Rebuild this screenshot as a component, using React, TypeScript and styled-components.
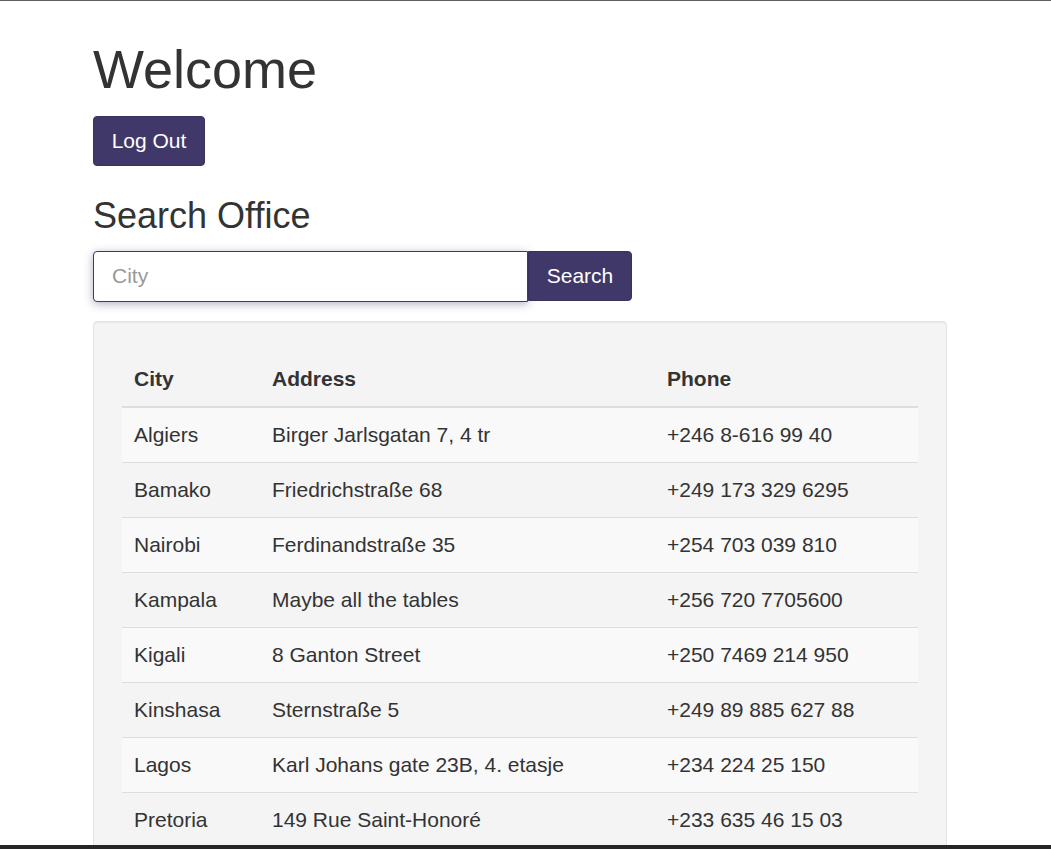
import React from "react"
import styled, { createGlobalStyle } from "styled-components"

interface Office {
    city: string
    address: string
    phone: string
}

const offices: Office[] = [
    { city: "Algiers", address: "Birger Jarlsgatan 7, 4 tr", phone: "+246 8-616 99 40" },
    { city: "Bamako", address: "Friedrichstraße 68", phone: "+249 173 329 6295" },
    { city: "Nairobi", address: "Ferdinandstraße 35", phone: "+254 703 039 810" },
    { city: "Kampala", address: "Maybe all the tables", phone: "+256 720 7705600" },
    { city: "Kigali", address: "8 Ganton Street", phone: "+250 7469 214 950" },
    { city: "Kinshasa", address: "Sternstraße 5", phone: "+249 89 885 627 88" },
    { city: "Lagos", address: "Karl Johans gate 23B, 4. etasje", phone: "+234 224 25 150" },
    { city: "Pretoria", address: "149 Rue Saint-Honoré", phone: "+233 635 46 15 03" },
]

const GlobalStyle = createGlobalStyle`
    html{
        scrollbar-width: none;
    }
    html::-webkit-scrollbar{
        display: none;
    }
    body{
        margin: 0;
        border-top: 1px solid #5f5f5f;
        background: #ffffff;
        color: #333333;
        font-family: "Liberation Sans", Arial, sans-serif;
    }
`

const App = () => {
    return (
        <>
            <GlobalStyle />
            <Page>
                <Title>Welcome</Title>
                <PurpleButton>Log Out</PurpleButton>
                <SubTitle>Search Office</SubTitle>
                <SearchRow>
                    <CityInput placeholder="City" />
                    <SearchButton>Search</SearchButton>
                </SearchRow>
                <Well>
                    <Table>
                        <thead>
                            <tr>
                                <Th $w={138}>City</Th>
                                <Th $w={395}>Address</Th>
                                <Th>Phone</Th>
                            </tr>
                        </thead>
                        <tbody>
                            {offices.map((o) => (
                                <Row key={o.city}>
                                    <Td>{o.city}</Td>
                                    <Td>{o.address}</Td>
                                    <Td>{o.phone}</Td>
                                </Row>
                            ))}
                        </tbody>
                    </Table>
                </Well>
            </Page>
            <WindowEdge />
        </>
    )
}

const Page = styled.div`
    width: 854px;
    margin-left: 93px;
    padding-top: 39px;
`

const Title = styled.h1`
    margin: 0;
    font-size: 54px;
    font-weight: 400;
    line-height: 1.1;
    color: #333333;
`

const PurpleButton = styled.button`
    display: block;
    box-sizing: border-box;
    margin-top: 17px;
    width: 112px;
    height: 50px;
    padding: 0;
    background: #41386a;
    border: 1px solid #3a3160;
    border-radius: 4px;
    color: #ffffff;
    font-family: "Liberation Sans", Arial, sans-serif;
    font-size: 21px;
`

const SubTitle = styled.h2`
    margin: 30px 0 15px;
    font-size: 36px;
    font-weight: 400;
    line-height: 1.1;
    color: #333333;
`

const SearchRow = styled.div`
    display: flex;
    align-items: flex-start;
`

const CityInput = styled.input`
    box-sizing: border-box;
    width: 435px;
    height: 51px;
    padding: 0 18px;
    border: 1px solid #41386a;
    border-radius: 4px 0 0 4px;
    box-shadow: 0 2px 10px rgba(65, 56, 106, 0.4);
    font-family: "Liberation Sans", Arial, sans-serif;
    font-size: 21px;
    color: #555555;
    outline: none;
    &::placeholder{
        color: #999999;
    }
`

const SearchButton = styled.button`
    box-sizing: border-box;
    width: 104px;
    height: 50px;
    background: #41386a;
    border: 1px solid #3a3160;
    border-radius: 0 4px 4px 0;
    color: #ffffff;
    font-family: "Liberation Sans", Arial, sans-serif;
    font-size: 21px;
`

const Well = styled.div`
    margin-top: 19px;
    padding: 30px 28px;
    background: #f4f4f4;
    border: 1px solid #e3e3e3;
    border-radius: 4px;
    box-shadow: inset 0 1px 1px rgba(0, 0, 0, 0.05);
`

const Table = styled.table`
    width: 100%;
    table-layout: fixed;
    border-collapse: collapse;
    border-spacing: 0;
    font-size: 21px;
    line-height: 30px;
`

const Th = styled.th<{ $w?: number }>`
    box-sizing: border-box;
    width: ${(p) => (p.$w ? `${p.$w}px` : "auto")};
    padding: 12px;
    text-align: left;
    font-weight: 700;
    border-bottom: 2px solid #dddddd;
`

const Row = styled.tr`
    &:nth-child(odd){
        background: #f9f9f9;
    }
    & + &{
        border-top: 1px solid #dddddd;
    }
`

const Td = styled.td`
    padding: 12px;
    vertical-align: top;
`

const WindowEdge = styled.div`
    position: fixed;
    left: 0;
    right: 0;
    bottom: 0;
    height: 4px;
    background: #262626;
`

export default App
